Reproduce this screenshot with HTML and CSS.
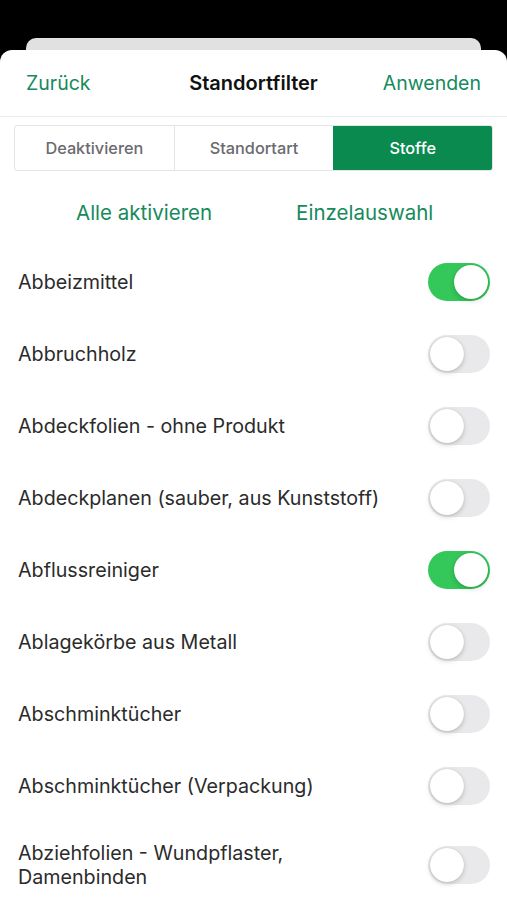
FILE: index.html
```html
<!DOCTYPE html>
<html lang="de">
<head>
<meta charset="utf-8">
<title>Standortfilter</title>
<link rel="stylesheet" href="styles.css">
</head>
<body>
<div class="back-card"></div>
<div class="sheet">
  <header class="nav">
    <span class="nav-btn nav-left">Zurück</span>
    <span class="nav-title">Standortfilter</span>
    <span class="nav-btn nav-right">Anwenden</span>
  </header>
  <div class="segment">
    <div class="seg">Deaktivieren</div>
    <div class="seg">Standortart</div>
    <div class="seg seg-on">Stoffe</div>
  </div>
  <div class="links">
    <span class="link">Alle aktivieren</span>
    <span class="link">Einzelauswahl</span>
  </div>
  <ul class="list">
    <li class="row"><span class="label">Abbeizmittel</span><span class="toggle on"></span></li>
    <li class="row"><span class="label">Abbruchholz</span><span class="toggle"></span></li>
    <li class="row"><span class="label">Abdeckfolien - ohne Produkt</span><span class="toggle"></span></li>
    <li class="row"><span class="label">Abdeckplanen (sauber, aus Kunststoff)</span><span class="toggle"></span></li>
    <li class="row"><span class="label">Abflussreiniger</span><span class="toggle on"></span></li>
    <li class="row"><span class="label">Ablagekörbe aus Metall</span><span class="toggle"></span></li>
    <li class="row"><span class="label">Abschminktücher</span><span class="toggle"></span></li>
    <li class="row"><span class="label">Abschminktücher (Verpackung)</span><span class="toggle"></span></li>
    <li class="row row-tall"><span class="label">Abziehfolien - Wundpflaster,<br>Damenbinden</span><span class="toggle"></span></li>
  </ul>
</div>
</body>
</html>
```
FILE: styles.css
```css
* { box-sizing: border-box; }
html, body { margin: 0; padding: 0; }
body {
  background: #000;
  font-family: Inter, "Noto Sans", Arial, sans-serif;
  width: 507px;
  height: 900px;
  overflow: hidden;
}
.back-card {
  margin: 38px 26px 0;
  height: 12px;
  background: #e1e1e1;
  border-radius: 10px 10px 0 0;
}
.sheet {
  background: #fff;
  border-radius: 12px 12px 0 0;
  height: 850px;
}
.nav {
  height: 67px;
  display: grid;
  grid-template-columns: 1fr auto 1fr;
  align-items: center;
  padding: 0 26px;
  border-bottom: 1px solid #ececec;
}
.nav-btn {
  color: #168a5c;
  font-size: 19.5px;
}
.nav-left { justify-self: start; }
.nav-right { justify-self: end; }
.nav-title {
  font-weight: 600;
  font-size: 20px;
  color: #111;
}
.segment {
  display: flex;
  margin: 8px 14px 0;
  height: 46px;
  border: 1px solid #e4e4e4;
  border-radius: 3px;
  overflow: hidden;
}
.seg {
  flex: 1;
  display: flex;
  align-items: center;
  justify-content: center;
  font-size: 16.3px;
  font-weight: 500;
  color: #6a6a6f;
  border-left: 1px solid #e4e4e4;
}
.seg:first-child { border-left: none; }
.seg-on {
  background: #0a8a4f;
  color: #fff;
  border-left: none;
}
.links {
  display: flex;
  gap: 84px;
  height: 42px;
  margin-top: 20px;
  padding-left: 76px;
  align-items: center;
}
.link {
  font-size: 20.5px;
  color: #168a5c;
}
.list {
  list-style: none;
  margin: 13px 0 0;
  padding: 0;
}
.row {
  display: flex;
  align-items: center;
  justify-content: space-between;
  height: 72px;
  padding: 0 17px 0 18px;
}
.row-tall {
  height: 86px;
}
.label {
  font-size: 19.7px;
  line-height: 24px;
  color: #2b2b2b;
}
.toggle {
  position: relative;
  flex: 0 0 62px;
  width: 62px;
  height: 38px;
  border-radius: 19px;
  background: #e9e9eb;
}
.toggle::after {
  content: "";
  position: absolute;
  top: 2px;
  left: 2px;
  width: 34px;
  height: 34px;
  border-radius: 50%;
  background: #fff;
  box-shadow: 0 2px 5px rgba(0,0,0,0.18), 0 0 1px rgba(0,0,0,0.2);
}
.toggle.on { background: #34c759; }
.toggle.on::after { left: 26px; }
```
